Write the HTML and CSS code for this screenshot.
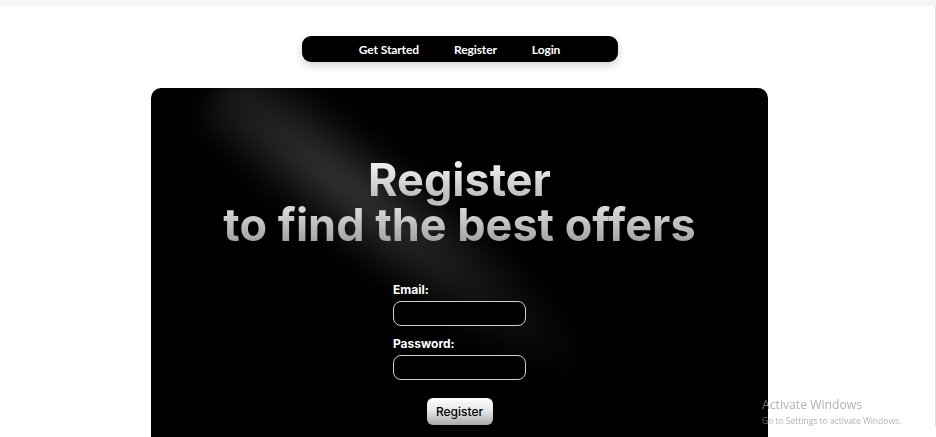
FILE: index.html
```html
<!DOCTYPE html>
<html lang="en">
<head>
<meta charset="utf-8">
<title>Register</title>
<link rel="stylesheet" href="styles.css">
</head>
<body>
<div class="topbar"></div>
<div class="page">
  <div class="main">
    <nav class="nav">
      <a href="#" class="nav-link">Get Started</a>
      <a href="#" class="nav-link">Register</a>
      <a href="#" class="nav-link">Login</a>
    </nav>
    <section class="card">
      <div class="beam"></div>
      <h1 class="title"><span class="title-line">Register</span><span class="title-line title-line-2">to find the best offers</span></h1>
      <form class="form">
        <label class="label" for="email">Email:</label>
        <input class="input" id="email" type="email">
        <label class="label label-pw" for="pw">Password:</label>
        <input class="input" id="pw" type="password">
        <button class="btn" type="button">Register</button>
      </form>
    </section>
  </div>
  <div class="scroll"><div class="scroll-thumb"></div></div>
</div>
<div class="activate">
  <div class="activate-title">Activate Windows</div>
  <div class="activate-sub">Go to Settings to activate Windows.</div>
</div>
</body>
</html>
```
FILE: styles.css
```css
html, body {
  margin: 0;
  padding: 0;
  height: 100%;
  overflow: hidden;
  background: #fff;
}
body {
  font-family: "Inter", "Noto Sans", sans-serif;
}
.topbar {
  height: 6px;
  background: #f4f5f7;
}
.page {
  display: flex;
  height: calc(100% - 6px);
}
.main {
  width: 919px;
  display: flex;
  flex-direction: column;
  align-items: center;
}
.scroll {
  flex: 1;
  display: flex;
  justify-content: flex-end;
}
.scroll-thumb {
  width: 1px;
  height: 420px;
  background: #dcdcdc;
}
.nav {
  flex-shrink: 0;
  margin-top: 30px;
  width: 316px;
  height: 26px;
  background: #000;
  border-radius: 9px;
  box-shadow: 0 4px 8px rgba(0,0,0,0.18);
  display: flex;
  justify-content: center;
  align-items: center;
  gap: 35px;
}
.nav-link {
  color: #fff;
  text-decoration: none;
  font-family: "Lato", sans-serif;
  font-weight: 700;
  font-size: 12px;
  letter-spacing: -0.1px;
}
.card {
  flex-shrink: 0;
  position: relative;
  overflow: hidden;
  margin-top: 26px;
  width: 617px;
  height: 349px;
  background: #000;
  border-radius: 10px 10px 0 0;
  display: flex;
  flex-direction: column;
  align-items: center;
}
.beam {
  position: absolute;
  left: 70px;
  top: -75px;
  width: 520px;
  height: 150px;
  transform: rotate(38deg);
  transform-origin: 0 50%;
  background: radial-gradient(ellipse 60% 40% at 30% 50%, rgba(255,255,255,0.21), rgba(255,255,255,0.08) 55%, rgba(255,255,255,0) 100%);
  filter: blur(12px);
  pointer-events: none;
}
.title {
  position: relative;
  margin: 69px 0 0;
  display: flex;
  flex-direction: column;
  align-items: center;
  font-family: "Inter", sans-serif;
  font-weight: 700;
  font-size: 45px;
  line-height: 45px;
  text-align: center;
}
.title-line {
  display: block;
  padding-bottom: 12px;
  margin-bottom: -12px;
  background: linear-gradient(180deg, #eeeeee 15%, #bdbdbd 70%);
  -webkit-background-clip: text;
  background-clip: text;
  color: transparent;
}
.title-line-2 {
  background: linear-gradient(180deg, #d6d6d6 15%, #a2a2a2 70%);
  -webkit-background-clip: text;
  background-clip: text;
}
.form {
  position: relative;
  margin-top: 35px;
  display: flex;
  flex-direction: column;
  width: 133px;
}
.label {
  color: #fff;
  font-family: "Inter", sans-serif;
  font-weight: 700;
  font-size: 12px;
  line-height: 15px;
  margin-bottom: 4px;
}
.label-pw {
  margin-top: 10px;
}
.input {
  box-sizing: border-box;
  width: 133px;
  height: 25px;
  background: #000;
  border: 1px solid #d0d0d0;
  border-radius: 8px;
  color: #fff;
  padding: 0 8px;
  outline: none;
}
.btn {
  align-self: center;
  margin-top: 18px;
  width: 66px;
  height: 27px;
  border: none;
  border-radius: 6px;
  background: linear-gradient(180deg, #ffffff 0%, #e4e4e4 50%, #a9a9a9 100%);
  color: #000;
  font-family: "Inter", sans-serif;
  font-weight: 500;
  font-size: 12px;
  padding: 0;
}
.activate {
  position: fixed;
  left: 762px;
  top: 396px;
  color: rgba(150,150,150,0.75);
  font-family: "Open Sans", sans-serif;
  pointer-events: none;
}
.activate-title {
  font-size: 12.2px;
  line-height: 17px;
}
.activate-sub {
  font-size: 8.5px;
  line-height: 12px;
  margin-top: 2px;
}
```
